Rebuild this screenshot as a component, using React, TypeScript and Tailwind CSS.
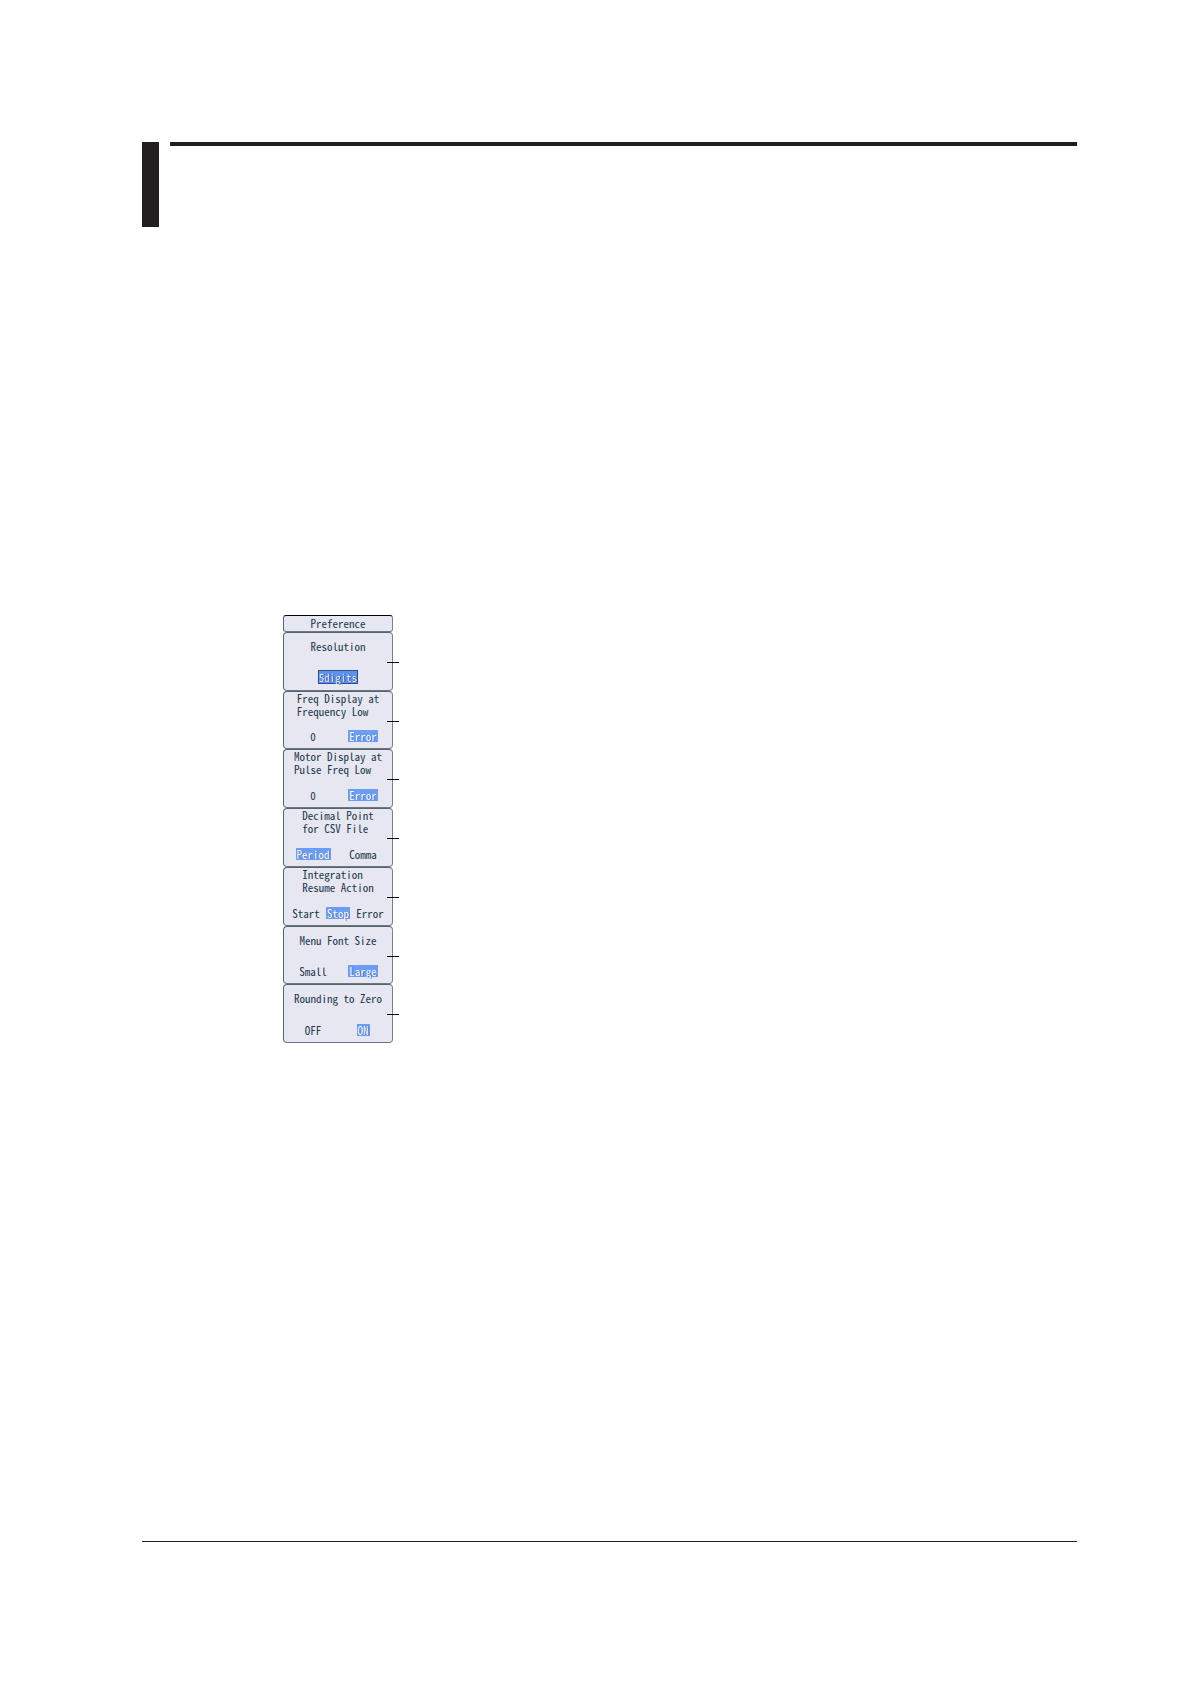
import { useState } from "react";

type Setting = {
  lines: string[];
  options: string[];
  initial: number;
};

const settings: Setting[] = [
  { lines: ["Resolution"], options: ["5digits"], initial: 0 },
  { lines: ["Freq Display at", "Frequency Low"], options: ["0", "Error"], initial: 1 },
  { lines: ["Motor Display at", "Pulse Freq Low"], options: ["0", "Error"], initial: 1 },
  { lines: ["Decimal Point", "for CSV File"], options: ["Period", "Comma"], initial: 0 },
  { lines: ["Integration", "Resume Action"], options: ["Start", "Stop", "Error"], initial: 1 },
  { lines: ["Menu Font Size"], options: ["Small", "Large"], initial: 1 },
  { lines: ["Rounding to Zero"], options: ["OFF", "ON"], initial: 1 },
];

const columns: Record<number, string> = {
  1: "grid-cols-1",
  2: "grid-cols-2 w-[100px]",
  3: "grid-cols-3 w-24",
};

function SoftKey({ lines, options, initial }: Setting) {
  const [selected, setSelected] = useState(initial);
  const single = options.length === 1;
  return (
    <section
      aria-label={lines.join(" ")}
      className="relative flex flex-col items-center justify-between rounded-[4px] border border-t-[#56646e] border-r-[#76828c] border-b-[#6b7780] border-l-[#56646e] bg-[#e6e7f0] pb-[6px]"
    >
      <h2 className={lines.length === 1 ? "mt-[7px] whitespace-pre" : "whitespace-pre"}>
        {lines.join("\n")}
      </h2>
      <div className={`grid justify-items-center ${columns[options.length]}`}>
        {options.map((option, i) => (
          <button
            key={option}
            type="button"
            aria-pressed={i === selected}
            onClick={() => setSelected(i)}
            className={
              single
                ? "border border-[#2f4f8c] bg-[#5b93ee] leading-3 text-[#e4eeff] [text-shadow:1px_0_#1f3f78]"
                : i === selected
                  ? "bg-[#6c9df5] px-px leading-3 text-white [text-shadow:1px_0_#4c70b8]"
                  : "leading-3"
            }
          >
            {option}
          </button>
        ))}
      </div>
      <span aria-hidden="true" className="absolute top-[29px] -right-[7px] h-px w-3 bg-black" />
    </section>
  );
}

export default function App() {
  return (
    <main className="flex min-h-screen flex-col bg-white py-[142px] pr-[114px] pl-[142px]">
      <header className="flex gap-[11px]">
        <div className="h-[85px] w-[17px] bg-[#231f20]" />
        <div className="h-1 flex-1 bg-[#231f20]" />
      </header>
      <div className="mt-[388px] ml-[141px] w-[110px] font-['Noto_Sans_Mono_CJK_JP','Liberation_Mono',monospace] text-[11px] leading-[13px] text-[#22384a]">
        <h1 className="h-[17px] rounded-[3px] border border-t-black border-r-[#76828c] border-b-[#6b7780] border-l-[#56646e] bg-[#e6e7f0] text-center leading-[14px]">
          Preference
        </h1>
        <div className="grid h-[411px] grid-rows-7">
          {settings.map((setting) => (
            <SoftKey key={setting.lines[0]} {...setting} />
          ))}
        </div>
      </div>
      <hr className="mt-auto h-px border-0 bg-[#231f20]" />
    </main>
  );
}
